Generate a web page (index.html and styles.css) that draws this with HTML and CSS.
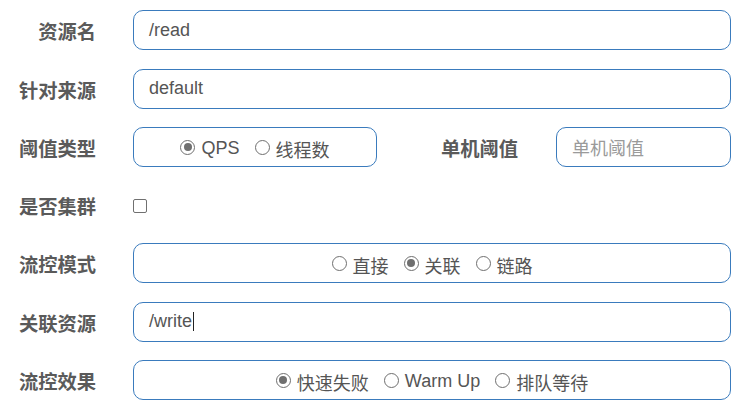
FILE: index.html
```html
<!DOCTYPE html>
<html lang="zh">
<head>
<meta charset="utf-8">
<title>流控规则</title>
<link rel="stylesheet" href="styles.css">
</head>
<body>
<form class="form">
  <div class="row">
    <label class="label">资源名</label>
    <div class="control">/read</div>
  </div>
  <div class="row">
    <label class="label">针对来源</label>
    <div class="control">default</div>
  </div>
  <div class="row">
    <label class="label">阈值类型</label>
    <div class="control radios half">
      <span class="opt"><span class="radio checked"></span>QPS</span>
      <span class="opt"><span class="radio"></span>线程数</span>
    </div>
    <label class="label label2">单机阈值</label>
    <div class="control small placeholder">单机阈值</div>
  </div>
  <div class="row row-check">
    <label class="label">是否集群</label>
    <span class="checkbox"></span>
  </div>
  <div class="row">
    <label class="label">流控模式</label>
    <div class="control radios">
      <span class="opt"><span class="radio"></span>直接</span>
      <span class="opt"><span class="radio checked"></span>关联</span>
      <span class="opt"><span class="radio"></span>链路</span>
    </div>
  </div>
  <div class="row">
    <label class="label">关联资源</label>
    <div class="control">/write<span class="caret"></span></div>
  </div>
  <div class="row">
    <label class="label">流控效果</label>
    <div class="control radios">
      <span class="opt"><span class="radio checked"></span>快速失败</span>
      <span class="opt"><span class="radio"></span>Warm Up</span>
      <span class="opt"><span class="radio"></span>排队等待</span>
    </div>
  </div>
</form>
</body>
</html>
```
FILE: styles.css
```css
html, body {
  margin: 0;
  padding: 0;
  background: #fff;
}
body {
  font-family: "Liberation Sans", "Noto Sans CJK SC", sans-serif;
  color: #555;
}
.form {
  padding-top: 10px;
  display: flex;
  flex-direction: column;
  gap: 18.5px;
}
.row {
  display: flex;
  align-items: center;
  height: 40px;
  padding-right: 20px;
}
.row-check {
  height: 39px;
}
.label {
  flex: none;
  width: 96px;
  margin-right: 37px;
  text-align: right;
  font-weight: bold;
  font-size: 19.3px;
  color: #5a5a5a;
  padding-top: 2px;
  box-sizing: border-box;
  white-space: nowrap;
}
.control {
  flex: 1;
  box-sizing: border-box;
  height: 40px;
  border: 1px solid #3a7bbd;
  border-radius: 10px;
  padding: 0 15px;
  display: flex;
  align-items: center;
  font-size: 18px;
  color: #555;
}
.control.half {
  flex: none;
  width: 244px;
}
.label2 {
  flex: 1;
  width: auto;
  margin-right: 38px;
}
.control.small {
  flex: none;
  width: 175px;
}
.placeholder {
  color: #9a9a9a;
}
.radios {
  justify-content: center;
  gap: 15px;
  padding-top: 3px;
}
.opt {
  display: inline-flex;
  align-items: center;
  gap: 6px;
}
.radio {
  width: 15px;
  height: 15px;
  box-sizing: border-box;
  border: 1px solid #6f6f6f;
  border-radius: 50%;
  background: #fff;
  display: inline-flex;
  align-items: center;
  justify-content: center;
  margin-top: -3px;
}
.radio.checked {
  border-width: 1.5px;
}
.radio.checked::after {
  content: "";
  width: 8px;
  height: 8px;
  border-radius: 50%;
  background: #6f6f6f;
}
.checkbox {
  width: 14px;
  height: 14px;
  box-sizing: border-box;
  border: 1px solid #707070;
  border-radius: 2px;
  background: #fff;
  margin-top: 2px;
}
.caret {
  display: inline-block;
  width: 1px;
  height: 19px;
  background: #222;
  margin-left: 1px;
}
```
